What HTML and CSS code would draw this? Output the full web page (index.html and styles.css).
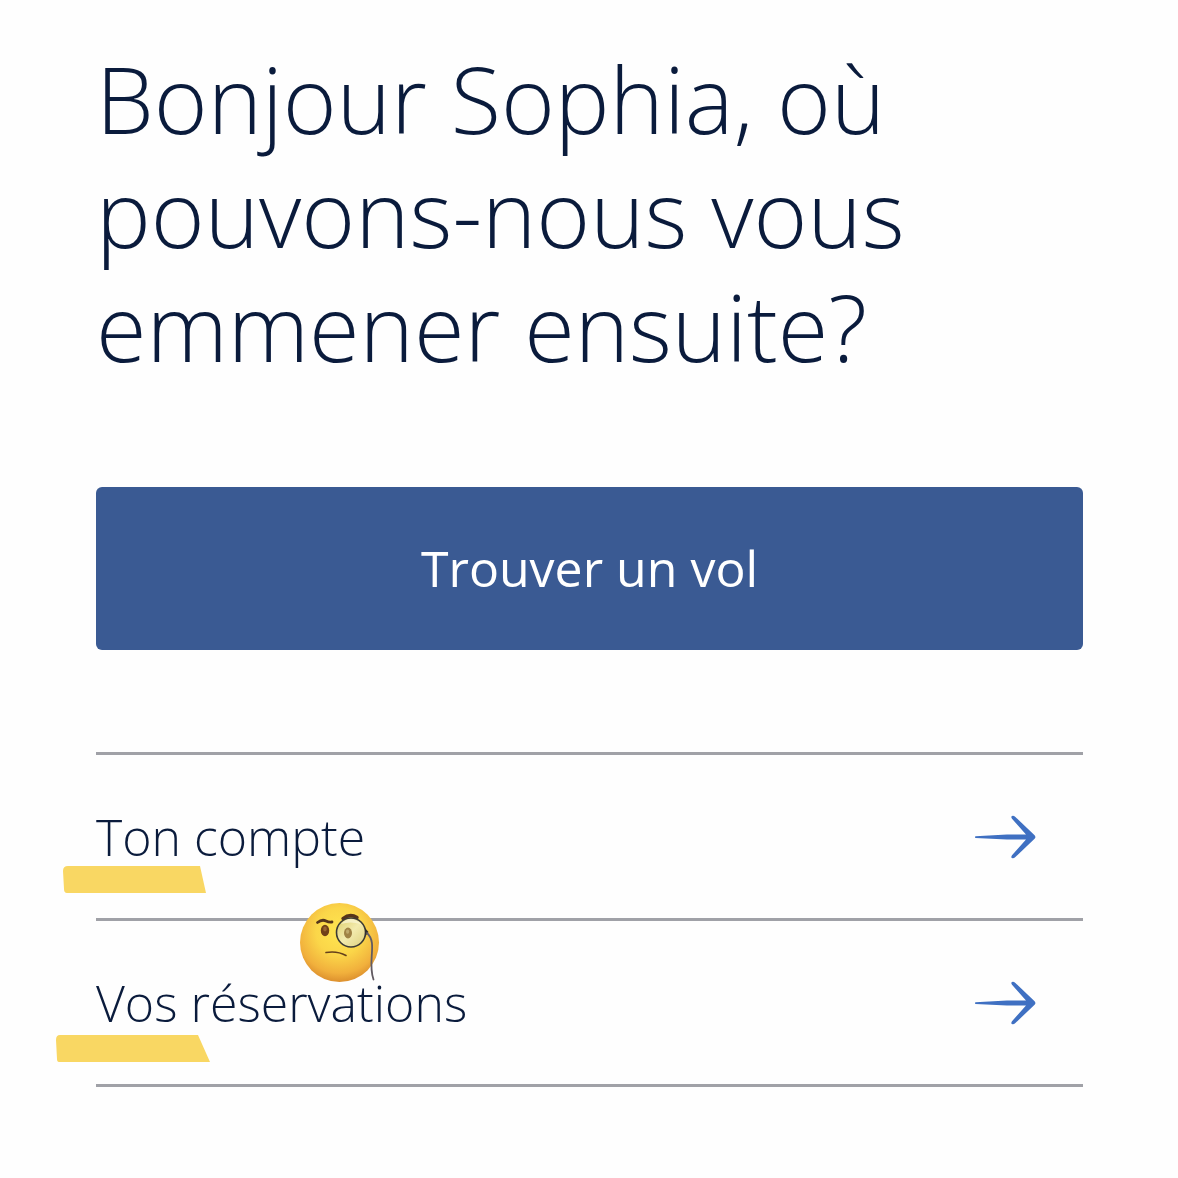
FILE: index.html
```
<!DOCTYPE html>
<html lang="fr">
<head>
<meta charset="UTF-8">
<meta name="viewport" content="width=device-width, initial-scale=1.0">
<title>Trouver un vol</title>
<link rel="stylesheet" href="styles.css">
</head>
<body>

<main class="page">
    <h1 class="greeting">Bonjour Sophia, où pouvons-nous vous emmener ensuite?</h1>

    <button type="button" class="find-flight">Trouver un vol</button>

    <nav>
        <ul class="links">
            <li class="links-item">
                <a href="#compte" class="link">
                    <span class="link-label">Ton compte</span>
                    <svg class="arrow" viewBox="0 0 62 44" aria-hidden="true">
                        <path d="M1.5 21.2 L33 19.4 H52 L38 3.8 Q36.6 1.8 38 1 Q39.4 .2 41.4 2 L60.6 20.2 Q62.2 22 60.6 23.8 L41.4 42 Q39.4 43.8 38 43 Q36.6 42.2 38 40.2 L52 24.6 H33 L1.5 22.9 Q.4 22 1.5 21.2Z"/>
                    </svg>
                </a>
                <svg class="marker marker-compte" viewBox="0 0 144 28" aria-hidden="true">
                    <path d="M6 1 L138 1 L144 28 L5 28 Q2 28 2 24 L1 6 Q1 1 6 1Z"/>
                </svg>
            </li>
            <li class="links-item">
                <a href="#reservations" class="link">
                    <span class="link-label">Vos réservations</span>
                    <svg class="arrow" viewBox="0 0 62 44" aria-hidden="true">
                        <path d="M1.5 21.2 L33 19.4 H52 L38 3.8 Q36.6 1.8 38 1 Q39.4 .2 41.4 2 L60.6 20.2 Q62.2 22 60.6 23.8 L41.4 42 Q39.4 43.8 38 43 Q36.6 42.2 38 40.2 L52 24.6 H33 L1.5 22.9 Q.4 22 1.5 21.2Z"/>
                    </svg>
                </a>
                <svg class="marker marker-reservations" viewBox="0 0 154 28" aria-hidden="true">
                    <path d="M4 0 H142 L154 27 L3 27 Q1 27 1 24 L0 5 Q0 0 4 0Z"/>
                </svg>
                <!-- face with monocle -->
                <svg class="emoji" viewBox="0 0 80 80" role="img" aria-label="Visage avec monocle">
                    <defs>
                        <radialGradient id="face" cx="50%" cy="36%" r="66%">
                            <stop offset="0" stop-color="#ffe650"/>
                            <stop offset=".45" stop-color="#fbd649"/>
                            <stop offset=".8" stop-color="#f1b03c"/>
                            <stop offset="1" stop-color="#d98a2b"/>
                        </radialGradient>
                        <linearGradient id="glass" x1="0" y1="0" x2="1" y2="1">
                            <stop offset="0" stop-color="#dccd6a"/>
                            <stop offset=".5" stop-color="#f3ebae"/>
                            <stop offset="1" stop-color="#dccf7c"/>
                        </linearGradient>
                    </defs>
                    <circle cx="39.5" cy="39.5" r="39.5" fill="url(#face)"/>
                    <ellipse cx="25" cy="27.5" rx="4.2" ry="5.8" fill="#704018"/>
                    <ellipse cx="25" cy="26" rx="1.8" ry="2.4" fill="#9a6532"/>
                    <path d="M17.5 19.5 Q22 16 26 18 Q29 19.5 32 19" fill="none" stroke="#56351b" stroke-width="2.8" stroke-linecap="round"/>
                    <path d="M43 15.5 Q50 10 57 14.5" fill="none" stroke="#56351b" stroke-width="3.4" stroke-linecap="round"/>
                    <circle cx="51" cy="29.5" r="14.5" fill="url(#glass)" stroke="#3d3b35" stroke-width="1.6"/>
                    <path d="M41 21 Q50 11 61 21 Q50 18 41 21Z" fill="#fbf7d8" opacity=".7"/>
                    <ellipse cx="48" cy="30" rx="4" ry="5.4" fill="#a08345"/>
                    <ellipse cx="47.6" cy="28.6" rx="1.6" ry="2.2" fill="#bfa96c"/>
                    <path d="M26 49.5 Q37 47.5 46 52.5" fill="none" stroke="#65401c" stroke-width="1.6" stroke-linecap="round"/>
                    <path d="M65 25 L68.5 29 L65.5 33Z" fill="#2c2b2c"/>
                    <path d="M67 30 C78 40 67 58 73.5 76.5" fill="none" stroke="#625b62" stroke-width="1.8" stroke-linecap="round"/>
                </svg>
            </li>
        </ul>
    </nav>
</main>

</body>
</html>
```
FILE: styles.css
```
* {
    box-sizing: border-box;
}
body {
    margin: 0;
    background-color: #fefefe;
    color: #0a1b3c;
    font-family: "Open Sans", "Noto Sans", sans-serif;
    font-weight: 300;
}
.page {
    padding: 42px 95px 90px 96px;
}
.greeting {
    max-width: 900px;
    margin: 0 0 103px;
    font-size: 92px;
    line-height: 114px;
    font-weight: 300;
}
.find-flight {
    display: block;
    width: 100%;
    padding: 48px 24px;
    border: 0;
    border-radius: 6px;
    background-color: #3a5a93;
    color: #ffffff;
    font-family: inherit;
    font-size: 50px;
    font-weight: 400;
    line-height: 67px;
    cursor: pointer;
}
.links {
    margin: 102px 0 0;
    padding: 0;
    list-style: none;
    border-top: 3px solid #a0a1a7;
}
.links-item {
    position: relative;
    border-bottom: 3px solid #a0a1a7;
}
.link {
    display: flex;
    align-items: center;
    justify-content: space-between;
    padding: 48px 47px 47px 0;
    color: inherit;
    font-size: 50px;
    line-height: 68px;
    text-decoration: none;
}
.arrow {
    width: 62px;
    height: 44px;
    fill: #3f70c2;
}
/* hand-drawn highlights and emoji lie over the list */
.marker {
    position: absolute;
    height: 28px;
    fill: #f9d763;
}
.marker-compte {
    left: -34px;
    top: 110px;
    width: 144px;
}
.marker-reservations {
    left: -40px;
    top: 114px;
    width: 154px;
}
.emoji {
    position: absolute;
    left: 204px;
    top: -18px;
    width: 80px;
    height: 80px;
}
@media screen and (max-width: 768px) {
    .page {
        padding: 24px 40px;
    }
    .greeting {
        margin-bottom: 48px;
        font-size: 44px;
        line-height: 56px;
    }
    .links {
        margin-top: 48px;
    }
}
```
